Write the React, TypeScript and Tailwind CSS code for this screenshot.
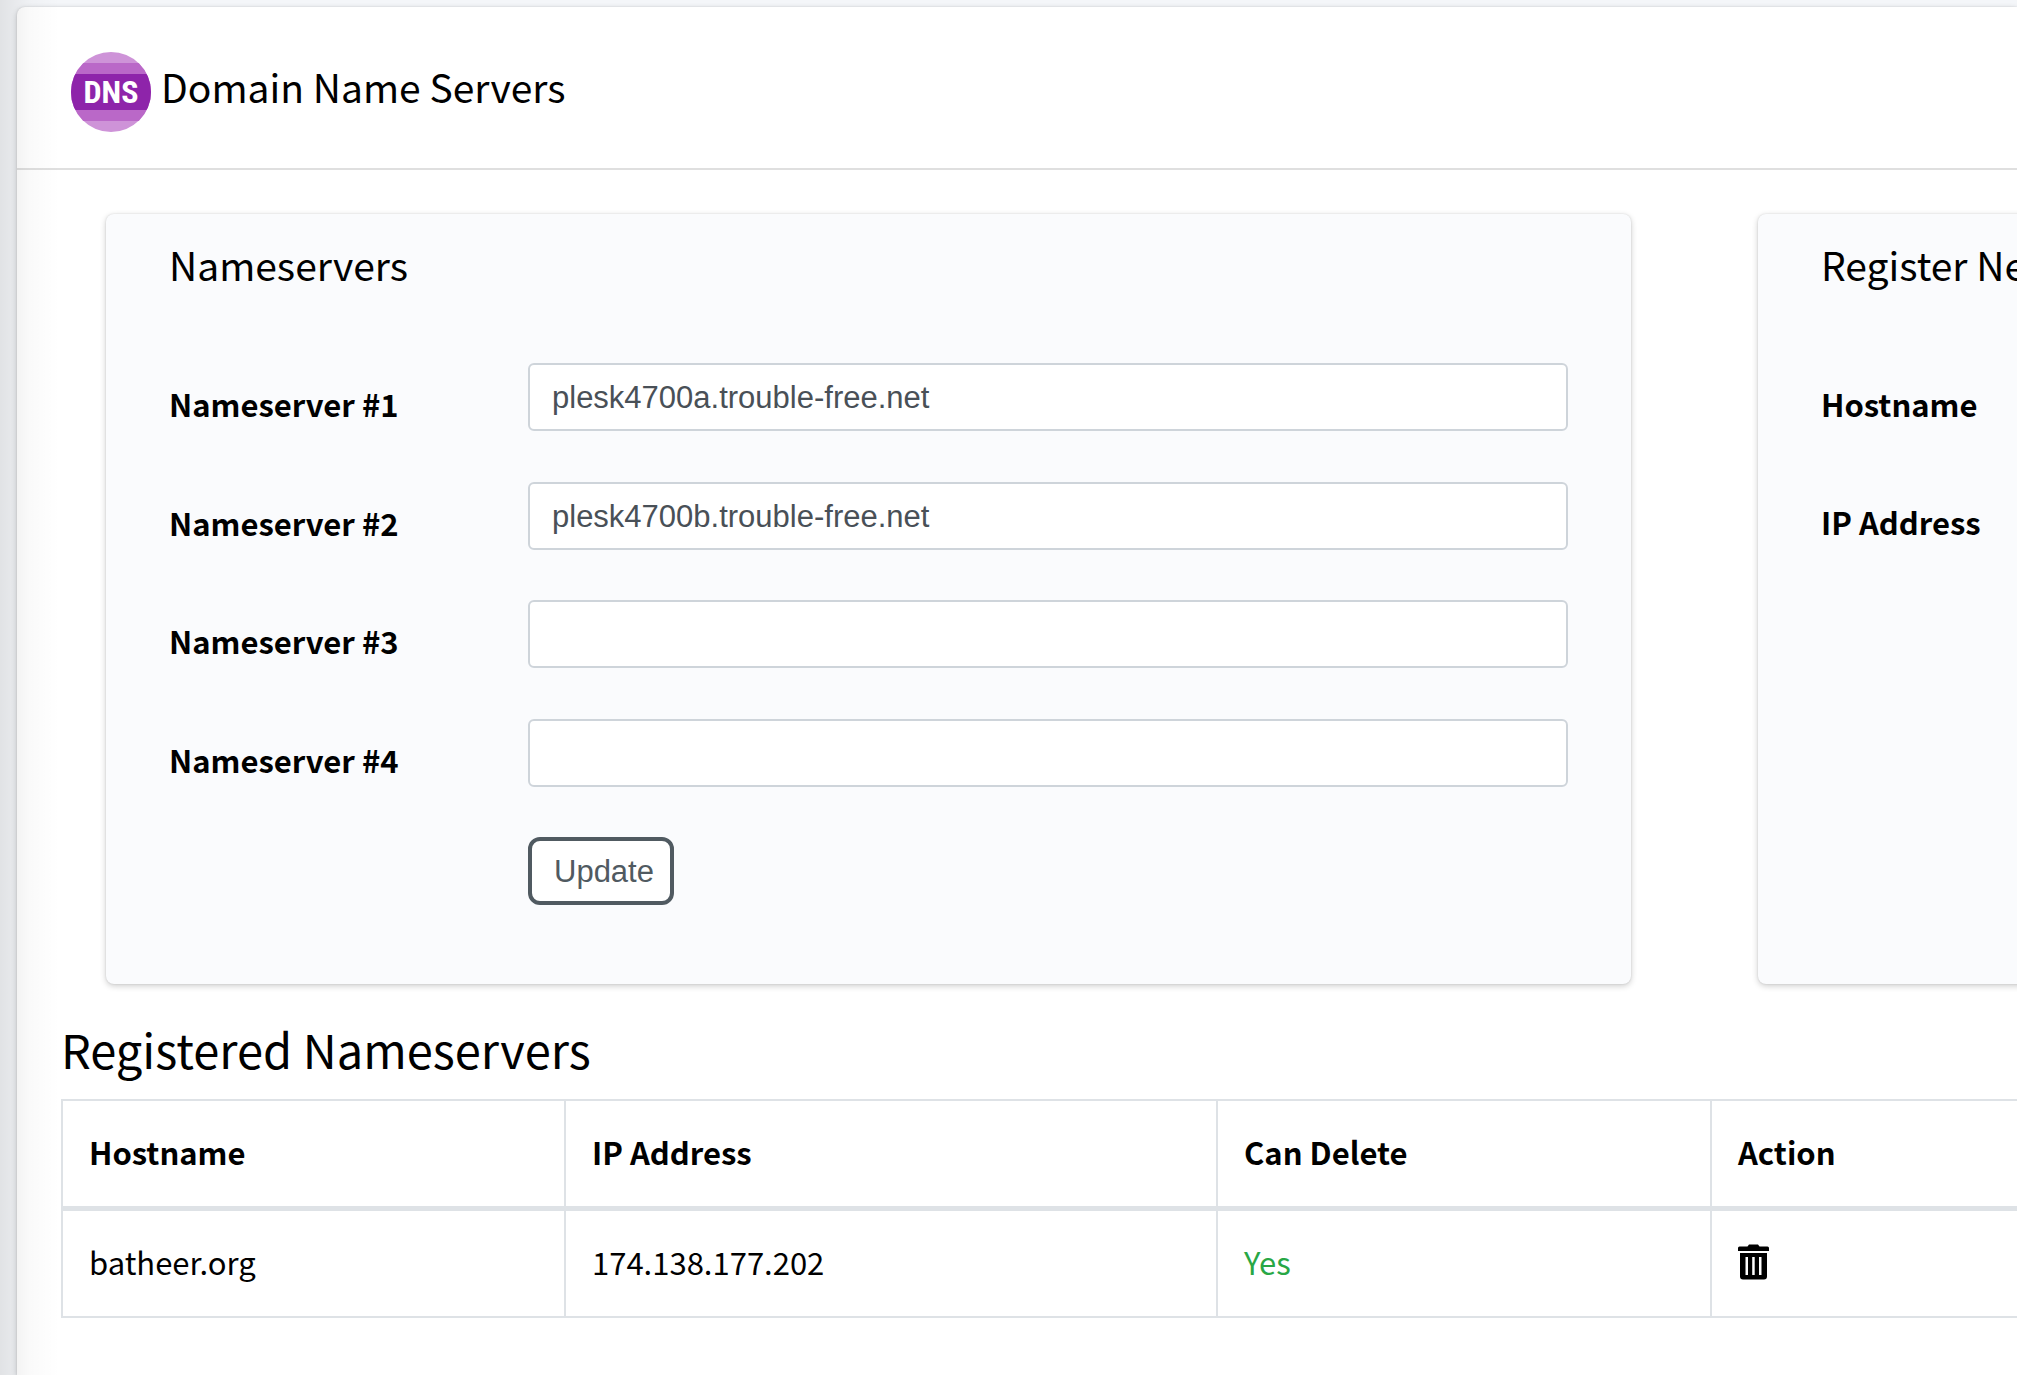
import React from "react";

const cardShadow = "shadow-[0_0_2px_rgba(0,0,0,0.125),0_2px_6px_rgba(0,0,0,0.2)]";

const nameservers = [
  { id: "ns1", label: "Nameserver #1", value: "plesk4700a.trouble-free.net" },
  { id: "ns2", label: "Nameserver #2", value: "plesk4700b.trouble-free.net" },
  { id: "ns3", label: "Nameserver #3", value: "" },
  { id: "ns4", label: "Nameserver #4", value: "" },
];

function DnsLogo() {
  return (
    <svg viewBox="0 0 80 80" className="size-20 shrink-0" role="img" aria-label="DNS">
      <defs>
        <clipPath id="disc">
          <circle cx="40" cy="40" r="40" />
        </clipPath>
      </defs>
      <g clipPath="url(#disc)">
        <rect width="80" height="80" fill="#ce93d8" />
        <rect y="11" width="80" height="58" fill="#ba68c8" />
        <rect y="22" width="80" height="36" fill="#8e24aa" />
      </g>
      <text
        x="40"
        y="51"
        textAnchor="middle"
        fill="#fff"
        fontSize="32"
        fontWeight="700"
        fontFamily="'Roboto Condensed', 'Liberation Sans Narrow', Roboto, sans-serif"
      >
        DNS
      </text>
    </svg>
  );
}

function TrashIcon() {
  return (
    <svg viewBox="0 0 31 36" className="h-9 w-[31px]" fill="currentColor" aria-hidden="true">
      <path d="M0 4Q0 2.500 1.500 2.500H9.500L11 .5H20L21.500 2.500H29.500Q31 2.500 31 4V7H0Z" />
      <path
        fillRule="evenodd"
        d="M2 9H29V32.500Q29 35.500 26 35.500H5Q2 35.500 2 32.500ZM7.500 13V31H10V13ZM14.200 13V31H16.700V13ZM21 13V31H23.500V13Z"
      />
    </svg>
  );
}

export default function App() {
  return (
    <div className="relative flex min-h-screen flex-col overflow-hidden bg-[#f4f6f9] pt-[7px] pl-[17px] font-['Noto_Sans_CJK_SC',sans-serif] text-[31px] text-black">
      <main className={`flex-1 rounded-tl-lg bg-white ${cardShadow}`}>
        <header className="flex items-start gap-2.5 border-b-2 border-[#dfdfdf] pt-[45px] pb-9 pl-[54px]">
          <DnsLogo />
          <h1 className="pt-2.5 text-[39px] leading-[48px]">Domain Name Servers</h1>
        </header>

        <div className="flex items-stretch gap-[127px] pt-11 pl-[89px]">
          <section className={`min-w-0 flex-1 rounded-lg bg-[#fafbfd] px-[63px] pt-[25px] pb-[79px] ${cardShadow}`}>
            <h2 className="text-[39px] leading-[50px]">Nameservers</h2>
            <form className="mt-[74px] flex h-[542px] flex-col justify-between" onSubmit={(e) => e.preventDefault()}>
              {nameservers.map((ns) => (
                <div key={ns.id} className="flex h-[68px] items-start">
                  <label htmlFor={ns.id} className="w-[359px] shrink-0 pt-[17px] leading-[48px] font-bold">
                    {ns.label}
                  </label>
                  <input
                    id={ns.id}
                    type="text"
                    defaultValue={ns.value}
                    className="h-[68px] min-w-0 flex-1 rounded-md border-2 border-[#ced4da] bg-white px-[22px] pt-0.5 font-['Liberation_Sans',sans-serif] text-[31px] text-[#495057]"
                  />
                </div>
              ))}
              <button
                type="submit"
                className="ml-[359px] h-[68px] self-start rounded-xl border-4 border-[#505a61] bg-white pt-0.5 pr-4 pl-[22px] font-['Liberation_Sans',sans-serif] text-[31px] text-[#505a61]"
              >
                Update
              </button>
            </form>
          </section>

          <section className={`-mr-4 w-[275px] shrink-0 rounded-lg bg-[#fafbfd] pt-[25px] pl-[63px] ${cardShadow}`}>
            <h2 className="text-[39px] leading-[50px] whitespace-nowrap">Register Ne</h2>
            <div className="mt-[74px] flex flex-col gap-[70px] pt-[17px] font-bold">
              <p className="leading-[48px]">Hostname</p>
              <p className="leading-[48px]">IP Address</p>
            </div>
          </section>
        </div>

        <section className="pt-[33px] pl-11">
          <h2 className="text-[47px] leading-[64px]">Registered Nameservers</h2>
          <table className="mt-[18px] w-full table-fixed border-collapse text-left leading-[48px]">
            <colgroup>
              <col className="w-[503px]" />
              <col className="w-[652px]" />
              <col className="w-[494px]" />
              <col />
            </colgroup>
            <thead>
              <tr className="h-[108px] border-b-[5px] border-[#dee2e6]">
                <th className="border-t-2 border-r-2 border-l-2 border-[#dee2e6] px-[26px] pb-0.5 font-bold">Hostname</th>
                <th className="border-t-2 border-r-2 border-[#dee2e6] px-[26px] pb-0.5 font-bold">IP Address</th>
                <th className="border-t-2 border-r-2 border-[#dee2e6] px-[26px] pb-0.5 font-bold">Can Delete</th>
                <th className="border-t-2 border-[#dee2e6] px-[26px] pb-0.5 font-bold">Action</th>
              </tr>
            </thead>
            <tbody>
              <tr className="h-[109px]">
                <td className="border-r-2 border-b-2 border-l-2 border-[#dee2e6] px-[26px] pb-0.5">batheer.org</td>
                <td className="border-r-2 border-b-2 border-[#dee2e6] px-[26px] pb-0.5">174.138.177.202</td>
                <td className="border-r-2 border-b-2 border-[#dee2e6] px-[26px] pb-0.5 text-[#28a745]">Yes</td>
                <td className="border-b-2 border-[#dee2e6] px-[26px] pb-0.5">
                  <button type="button" aria-label="Delete batheer.org" className="block">
                    <TrashIcon />
                  </button>
                </td>
              </tr>
            </tbody>
          </table>
        </section>
      </main>
      <div className="pointer-events-none absolute inset-y-0 left-0 w-[60px] bg-linear-to-r from-black/8 via-black/2 to-transparent" />
    </div>
  );
}
